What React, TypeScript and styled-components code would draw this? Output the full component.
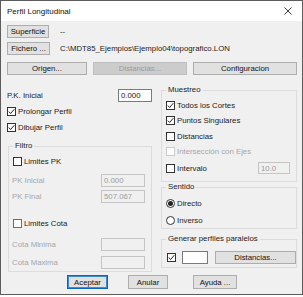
import styled, { createGlobalStyle } from "styled-components";

const GlobalStyle = createGlobalStyle`
  html, body {
    margin: 0;
    padding: 0;
    background: #ffffff;
  }
  body {
    font-family: "Liberation Sans", Arial, sans-serif;
    font-size: 7.8px;
    color: #1b1b1b;
  }
  * {
    box-sizing: border-box;
  }
`;

const Window = styled.div`
  width: 303px;
  height: 295px;
  border: 1px solid #5c5c5c;
  background: #f0f0f0;
  display: flex;
  flex-direction: column;
`;

const TitleBar = styled.div`
  height: 20px;
  background: #ffffff;
  display: flex;
  align-items: center;
  justify-content: space-between;
  padding: 0 10px 0 6px;
  flex: none;
`;

const Title = styled.span`
  font-size: 8px;
  color: #111;
`;

const Body = styled.div`
  padding: 4px 5px 0 6px;
  display: flex;
  flex-direction: column;
`;

const Row = styled.div<{ $mt?: number; $h?: number; $gap?: number }>`
  display: flex;
  align-items: center;
  margin-top: ${(p) => p.$mt ?? 0}px;
  height: ${(p) => p.$h ?? 13}px;
  gap: ${(p) => p.$gap ?? 0}px;
`;

const Button = styled.div<{ $w: number; $disabled?: boolean; $default?: boolean; $ml?: number }>`
  width: ${(p) => p.$w}px;
  height: 100%;
  margin-left: ${(p) => p.$ml ?? 0}px;
  display: flex;
  align-items: center;
  justify-content: center;
  background: ${(p) => (p.$disabled ? "#cccccc" : "#e1e1e1")};
  border: 1px solid ${(p) => (p.$disabled ? "#bfbfbf" : p.$default ? "#0a64c8" : "#adadad")};
  box-shadow: ${(p) => (p.$default ? "inset 0 0 0 1px #3c8ad8" : "none")};
  color: ${(p) => (p.$disabled ? "#9a9a9a" : "#111")};
  flex: none;
`;

const PlainText = styled.span<{ $ml?: number }>`
  margin-left: ${(p) => p.$ml ?? 0}px;
  white-space: nowrap;
`;

const Main = styled.div`
  display: grid;
  grid-template-columns: 145px 136px;
  column-gap: 9px;
  margin-top: 10px;
`;

const Column = styled.div<{ $pt?: number }>`
  display: flex;
  flex-direction: column;
  padding-top: ${(p) => p.$pt ?? 0}px;
`;

const Label = styled.span<{ $disabled?: boolean }>`
  color: ${(p) => (p.$disabled ? "#a6a6a6" : "#1b1b1b")};
  white-space: nowrap;
`;

const TextBox = styled.div<{ $w: number; $disabled?: boolean }>`
  width: ${(p) => p.$w}px;
  height: 100%;
  margin-left: auto;
  background: ${(p) => (p.$disabled ? "#f0f0f0" : "#ffffff")};
  border: 1px solid ${(p) => (p.$disabled ? "#c4c4c4" : "#7a7a7a")};
  color: ${(p) => (p.$disabled ? "#9a9a9a" : "#111")};
  display: flex;
  align-items: center;
  padding-left: 2px;
  flex: none;
`;

const Group = styled.fieldset<{ $mt?: number; $ml?: number; $pb?: number }>`
  margin: ${(p) => p.$mt ?? 0}px 0 0 ${(p) => p.$ml ?? 0}px;
  padding: 0 6px ${(p) => p.$pb ?? 0}px 3px;
  border: 1px solid #dcdcdc;
  min-width: 0;
  display: flex;
  flex-direction: column;
`;

const Legend = styled.legend`
  padding: 0 2px;
  margin-left: 1px;
  line-height: 10px;
  height: 10px;
  color: #1b1b1b;
`;

const BoxMark = styled.span<{ $tone: string }>`
  width: 9px;
  height: 9px;
  border: 1px solid ${(p) => p.$tone};
  background: #ffffff;
  display: inline-flex;
  align-items: center;
  justify-content: center;
  flex: none;
  margin-right: 2px;
`;

const RadioMark = styled.span`
  width: 9px;
  height: 9px;
  border: 1px solid #333;
  border-radius: 50%;
  background: #ffffff;
  display: inline-flex;
  align-items: center;
  justify-content: center;
  flex: none;
  margin-right: 2px;
`;

const RadioDot = styled.span`
  width: 5px;
  height: 5px;
  border-radius: 50%;
  background: #222;
`;

const CheckLine = styled.div<{ $mt?: number; $ml?: number }>`
  display: flex;
  align-items: center;
  height: 10px;
  margin-top: ${(p) => p.$mt ?? 0}px;
  margin-left: ${(p) => p.$ml ?? 0}px;
`;

const Footer = styled.div`
  display: flex;
  height: 14px;
  margin-top: 3px;
  padding-left: 60px;
`;

function Check({ label, checked, disabled, tone }: { label?: string; checked?: boolean; disabled?: boolean; tone?: string }) {
  const border = disabled ? "#cccccc" : tone ?? "#333333";
  return (
    <>
      <BoxMark $tone={border}>
        {checked && (
          <svg width="7" height="7" viewBox="0 0 7 7">
            <polyline points="0.8,3.6 2.6,5.5 6.3,1.2" fill="none" stroke="#222" strokeWidth="1" />
          </svg>
        )}
      </BoxMark>
      {label && <Label $disabled={disabled}>{label}</Label>}
    </>
  );
}

export default function App() {
  return (
    <>
      <GlobalStyle />
      <Window>
        <TitleBar>
          <Title>Perfil Longitudinal</Title>
          <svg width="8" height="8" viewBox="0 0 8 8">
            <path d="M0.5 0.5 L7.5 7.5 M7.5 0.5 L0.5 7.5" stroke="#222" strokeWidth="0.9" />
          </svg>
        </TitleBar>
        <Body>
          <Row $mt={0}>
            <Button $w={42}>Superficie</Button>
            <PlainText $ml={11}>--</PlainText>
          </Row>
          <Row $mt={4}>
            <Button $w={43}>Fichero ...</Button>
            <PlainText $ml={10}>C:\MDT85_Ejemplos\Ejemplo04\topografico.LON</PlainText>
          </Row>
          <Row $mt={7} $gap={6}>
            <Button $w={80}>Origen...</Button>
            <Button $w={94} $disabled>Distancias...</Button>
            <Button $w={104}>Configuracion</Button>
          </Row>

          <Main>
            <Column $pt={4}>
              <Row>
                <Label>P.K. Inicial</Label>
                <TextBox $w={34}>0.000</TextBox>
              </Row>
              <CheckLine $mt={4}>
                <Check label="Prolongar Perfil" checked />
              </CheckLine>
              <CheckLine $mt={6}>
                <Check label="Dibujar Perfil" checked />
              </CheckLine>

              <Group $mt={9} $ml={1} $pb={2}>
                <Legend>Filtro</Legend>
                <CheckLine $mt={5} $ml={1}>
                  <Check label="Limites PK" />
                </CheckLine>
                <Row $mt={8}>
                  <Label $disabled>PK Inicial</Label>
                  <TextBox $w={44} $disabled>0.000</TextBox>
                </Row>
                <Row $mt={3}>
                  <Label $disabled>PK Final</Label>
                  <TextBox $w={44} $disabled>507.067</TextBox>
                </Row>
                <CheckLine $mt={15} $ml={1}>
                  <Check label="Limites Cota" tone="#2f78c4" />
                </CheckLine>
                <Row $mt={10}>
                  <Label $disabled>Cota Minima</Label>
                  <TextBox $w={44} $disabled />
                </Row>
                <Row $mt={5}>
                  <Label $disabled>Cota Maxima</Label>
                  <TextBox $w={44} $disabled />
                </Row>
              </Group>
            </Column>

            <Column>
              <Group $pb={7}>
                <Legend>Muestreo</Legend>
                <CheckLine $mt={5} $ml={1}>
                  <Check label="Todos los Cortes" checked />
                </CheckLine>
                <CheckLine $mt={5} $ml={1}>
                  <Check label="Puntos Singulares" checked />
                </CheckLine>
                <CheckLine $mt={6} $ml={1}>
                  <Check label="Distancias" />
                </CheckLine>
                <CheckLine $mt={5} $ml={1}>
                  <Check label="Intersección con Ejes" disabled />
                </CheckLine>
                <Row $mt={6} $h={12}>
                  <CheckLine $ml={1}>
                    <Check label="Intervalo" />
                  </CheckLine>
                  <TextBox $w={32} $disabled>10.0</TextBox>
                </Row>
              </Group>

              <Group $pb={3}>
                <Legend>Sentido</Legend>
                <CheckLine $mt={6} $ml={1}>
                  <RadioMark>
                    <RadioDot />
                  </RadioMark>
                  <Label>Directo</Label>
                </CheckLine>
                <CheckLine $mt={7} $ml={1}>
                  <RadioMark />
                  <Label>Inverso</Label>
                </CheckLine>
              </Group>

              <Group $mt={5} $pb={3}>
                <Legend>Generar perfiles paralelos</Legend>
                <Row $mt={7} $gap={4}>
                  <CheckLine $ml={2}>
                    <Check checked />
                  </CheckLine>
                  <TextBox $w={26} style={{ marginLeft: 0 }} />
                  <Button $w={81} $ml={3}>Distancias...</Button>
                </Row>
              </Group>
            </Column>
          </Main>

          <Footer>
            <Button $w={41} $default>Aceptar</Button>
            <Button $w={40} $ml={20}>Anular</Button>
            <Button $w={44} $ml={25}>Ayuda ...</Button>
          </Footer>
        </Body>
      </Window>
    </>
  );
}
